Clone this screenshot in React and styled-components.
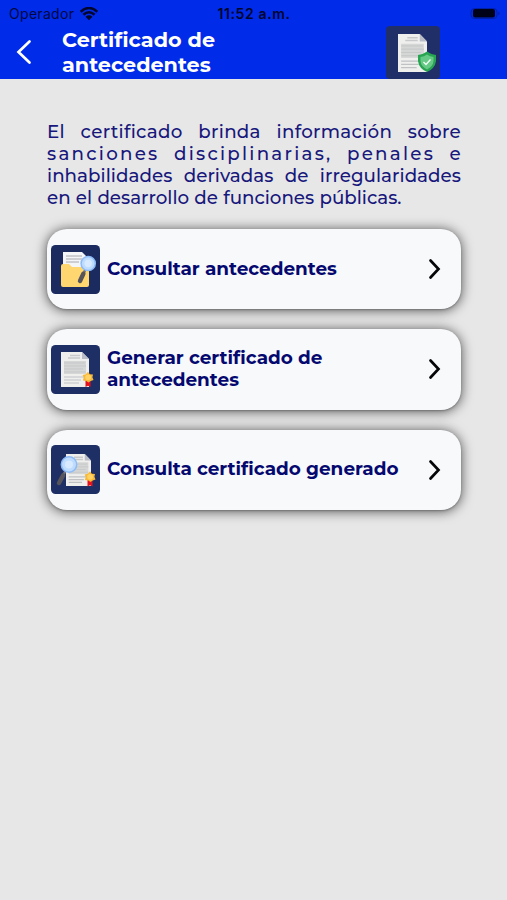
import React from 'react';
import styled, { createGlobalStyle } from 'styled-components';

const GlobalStyle = createGlobalStyle`
  * { box-sizing: border-box; }
  body { margin: 0; background: #e7e7e7; font-family: Montserrat, Inter, sans-serif; }
`;

const Screen = styled.div`
  min-height: 900px;
  background: #e7e7e7;
  overflow: hidden;
`;

const Header = styled.header`
  height: 79px;
  background: #002be9;
`;

const StatusBar = styled.div`
  height: 26px;
  padding: 1px 6px 0 9px;
  display: grid;
  grid-template-columns: 1fr auto 1fr;
  align-items: center;
  color: #00083f;
  font: 400 14px/25px Inter, sans-serif;
`;

const Carrier = styled.div`
  display: flex;
  align-items: center;
  gap: 6px;
  letter-spacing: 0.3px;
`;

const Clock = styled.div`
  margin-right: 2px;
  font-weight: 600;
  letter-spacing: 0.62px;
  color: #00052c;
`;

const Battery = styled.svg`
  justify-self: end;
`;

const NavBar = styled.div`
  height: 53px;
  display: flex;
  padding: 0 67px 0 16px;
`;

const BackButton = styled.button`
  width: 46px;
  padding: 0 0 2px;
  border: 0;
  background: none;
  display: flex;
  align-items: center;
  text-align: left;
`;

const Title = styled.h1`
  margin: 1px 0 0;
  flex: 1;
  color: #fff;
  font-size: 20.75px;
  line-height: 25px;
  font-weight: 700;
`;

const Line = styled.span`
  display: block;
  white-space: nowrap;
  letter-spacing: ${(p) => p.$spacing || 0}px;
`;

const Main = styled.main`
  padding: 41.6px 46px 0 47px;
`;

const Intro = styled.p`
  margin: 0 0 19.5px;
  color: #18187c;
  font-size: 18.25px;
  line-height: 22.2px;
  font-weight: 500;
`;

const IntroLine = styled(Line)`
  width: ${(p) => p.$width}px;
  text-align: justify;
  text-align-last: justify;
`;

const Options = styled.nav`
  display: flex;
  flex-direction: column;
  gap: 20px;
`;

const Option = styled.button`
  width: 414px;
  height: 80.3px;
  padding: 0 18px 0 4px;
  border: 0;
  border-radius: 20px;
  background: #f7f9fb;
  box-shadow: 0 1px 2px rgba(0, 0, 0, 0.22), 0 1px 12px 1px rgba(0, 0, 0, 0.58);
  display: flex;
  align-items: center;
  text-align: left;
  font-family: inherit;
`;

const Label = styled.span`
  flex: 1;
  margin: -0.4px 0 0 7px;
  color: #04086f;
  font-size: 18.42px;
  line-height: 22px;
  font-weight: 700;
`;

const Tile = styled.svg`
  display: block;
  flex: none;
`;

function Paper({ x = 10, y = 7, w = 28, h = 35 }) {
  return (
    <svg x={x} y={y} width={w} height={h} viewBox="0 0 28 35" preserveAspectRatio="none">
      <path d="M0 0H21L28 7V35H0Z" fill="#efefee" />
      <path d="M21 0V7H28Z" fill="#b9bdc8" />
      <path d="M9 3.5H19M7 6H19" stroke="#c8c9ca" strokeWidth="1.5" />
      <path d="M3 9H25V22H3Z" fill="#d5d6d6" />
      <path d="M3 11H24M3 14H25M3 17H22M3 20H25" stroke="#c1c3c4" strokeWidth=".7" />
      <path d="M3 25H25M3 28H20M3 31H18" stroke="#bfc1c3" strokeWidth="1.2" />
    </svg>
  );
}

function Ribbon() {
  return (
    <g>
      <path d="M34.5 35H39.5V42L37 40.8L34.5 42Z" fill="#e5121c" />
      <path
        d="M37 26.8L38.8 29.3L42 29.6L41.4 32.2L42.5 35L39.7 35.9L37.5 37.5L35.3 36L31.9 35.4L32.7 32.4L31.6 30L34.9 29.3Z"
        fill="#f9b936"
      />
      <circle cx="37.1" cy="32.3" r="2.9" fill="#ffd265" />
    </g>
  );
}

function Magnifier({ cx, cy, r, hx, hy }) {
  const dx = hx - cx;
  const dy = hy - cy;
  const n = Math.hypot(dx, dy);
  const sx = cx + (dx / n) * r;
  const sy = cy + (dy / n) * r;
  return (
    <g>
      <path d={`M${sx} ${sy}L${hx} ${hy}`} stroke="#77747a" strokeWidth="2.5" />
      <path
        d={`M${sx + (hx - sx) * 0.35} ${sy + (hy - sy) * 0.35}L${hx} ${hy}`}
        stroke="#57545a"
        strokeWidth="4.4"
        strokeLinecap="round"
      />
      <circle cx={cx} cy={cy} r={r} fill="#bedcff" stroke="#8dbbf6" strokeWidth="1.5" />
      <circle cx={cx} cy={cy} r={r * 0.52} fill="#d8eaff" />
    </g>
  );
}

function SearchFolderIcon() {
  return (
    <Tile width="49" height="49" viewBox="0 0 49 49">
      <rect width="49" height="49" rx="4.5" fill="#1b2b60" />
      <path d="M12 7H31L36 12V30H12Z" fill="#f4f5f6" />
      <path d="M15 11H31M15 14H31M15 17H28" stroke="#a6a8ae" strokeWidth="1" />
      <path d="M10 21Q10 19 12 19H18L21 22H38V40Q38 42 36 42H12Q10 42 10 40Z" fill="#ffd66f" />
      <Magnifier cx={37.2} cy={18.5} r={7.1} hx={29} hy={36} />
    </Tile>
  );
}

function CertificateIcon() {
  return (
    <Tile width="49" height="49" viewBox="0 0 49 49">
      <rect width="49" height="49" rx="4.5" fill="#1e2f65" />
      <Paper />
      <Ribbon />
    </Tile>
  );
}

function SearchCertificateIcon() {
  return (
    <Tile width="49" height="49" viewBox="0 0 49 49">
      <rect width="49" height="49" rx="4.5" fill="#1e2f65" />
      <Paper x={15} y={9} w={25} h={32} />
      <g transform="translate(2 -.5)"><Ribbon /></g>
      <Magnifier cx={18} cy={19.5} r={7.7} hx={8} hy={38} />
    </Tile>
  );
}

function VerifiedIcon() {
  return (
    <Tile width="54" height="53" viewBox="0 0 54 53">
      <rect width="54" height="53" rx="4" fill="#202f68" />
      <Paper x={12} y={8} w={29} h={38} />
      <path d="M41 25.5Q45 28.5 50 29V35Q49 42.5 41 46Q33 42.5 32 35V29Q37 28.5 41 25.5Z" fill="#28a551" />
      <path d="M41 28.5Q44 30.5 47.5 31V35Q47 40.5 41 43.5Q35 40.5 34.5 35V31Q38 30.5 41 28.5Z" fill="#66c986" />
      <path d="M37.5 36L40 38.5L44.5 33.5" fill="none" stroke="#f2fff4" strokeWidth="1.4" />
    </Tile>
  );
}

function WifiIcon() {
  return (
    <svg width="18" height="14" viewBox="0 0 18 14">
      <path d="M.7 4.7Q9-2.7 17.3 4.7M3.4 7.7Q9 2.8 14.6 7.7" fill="none" stroke="#00062d" strokeWidth="2.5" />
      <path d="M5.5 9.7Q9 6.8 12.5 9.7L9 13.2Z" fill="#00062d" />
    </svg>
  );
}

const options = [
  { Icon: SearchFolderIcon, lines: ['Consultar antecedentes'] },
  { Icon: CertificateIcon, lines: ['Generar certificado de', 'antecedentes'] },
  { Icon: SearchCertificateIcon, lines: ['Consulta certificado generado'] },
];

export default function App() {
  return (
    <Screen>
      <GlobalStyle />
      <Header>
        <StatusBar>
          <Carrier>Operador <WifiIcon /></Carrier>
          <Clock>11:52 a.m.</Clock>
          <Battery width="31" height="12" viewBox="0 0 31 12">
            <rect x="1" y=".5" width="26" height="10" rx="3.5" fill="none" stroke="#0020a8" />
            <rect x="3" y="1" width="22" height="8.5" rx="2" fill="#000218" />
            <path d="M28.5 3.5Q30.5 5.5 28.5 7.5Z" fill="#0017a0" />
          </Battery>
        </StatusBar>
        <NavBar>
          <BackButton aria-label="Volver">
            <svg width="16" height="26" viewBox="0 0 16 26">
              <path d="M13.5 2.5L2.5 13L13.5 23.5" fill="none" stroke="#fff" strokeWidth="2.7" strokeLinecap="round" />
            </svg>
          </BackButton>
          <Title>
            <Line>Certificado de</Line>
            <Line>antecedentes</Line>
          </Title>
          <VerifiedIcon />
        </NavBar>
      </Header>
      <Main>
        <Intro>
          <IntroLine $width={414} $spacing={0.3}>El certificado brinda información sobre</IntroLine>
          <IntroLine $width={416} $spacing={2.25}>sanciones disciplinarias, penales e</IntroLine>
          <IntroLine $width={414} $spacing={0.05}>inhabilidades derivadas de irregularidades</IntroLine>
          <IntroLine $width={354.5}>en el desarrollo de funciones públicas.</IntroLine>
        </Intro>
        <Options>
          {options.map(({ Icon, lines }) => (
            <Option key={lines[0]}>
              <Icon />
              <Label>
                {lines.map((text) => <Line key={text}>{text}</Line>)}
              </Label>
              <svg width="16" height="24" viewBox="0 0 16 24">
                <path d="M3.5 3.5L11.5 12L3.5 20.5" fill="none" stroke="#050607" strokeWidth="2.7" strokeLinecap="round" />
              </svg>
            </Option>
          ))}
        </Options>
      </Main>
    </Screen>
  );
}
